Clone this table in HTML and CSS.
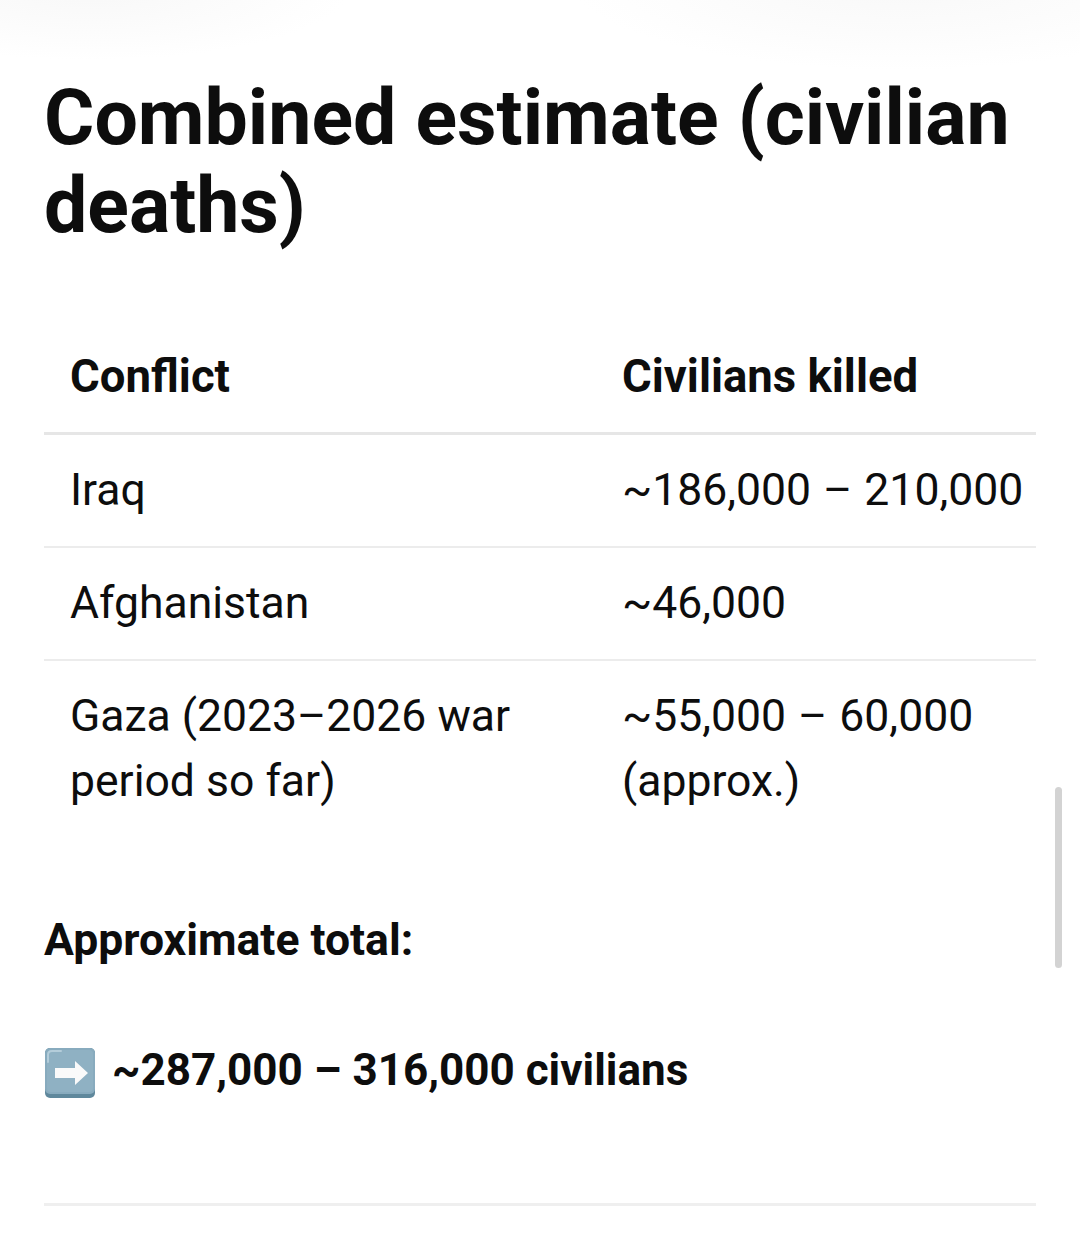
FILE: index.html
```html
<!DOCTYPE html>
<html lang="en">
<head>
<meta charset="utf-8">
<title>Combined estimate</title>
<link rel="stylesheet" href="styles.css">
</head>
<body>
<main class="page">
  <h1 class="title">Combined estimate (civilian deaths)</h1>
  <table class="data">
    <thead>
      <tr><th class="c1">Conflict</th><th class="c2">Civilians killed</th></tr>
    </thead>
    <tbody>
      <tr><td>Iraq</td><td>~186,000 – 210,000</td></tr>
      <tr><td>Afghanistan</td><td>~46,000</td></tr>
      <tr><td>Gaza (2023–2026 war period so far)</td><td>~55,000 – 60,000 (approx.)</td></tr>
    </tbody>
  </table>
  <p class="label">Approximate total:</p>
  <p class="total"><svg class="emoji" viewBox="0 0 50 50" width="50" height="50" aria-hidden="true">
      <rect x="0" y="0" width="50" height="50" rx="5" fill="#5f889c"/>
      <rect x="0" y="0" width="50" height="46" rx="5" fill="#88abbe"/>
      <rect x="2" y="2" width="46" height="42" rx="4" fill="#8fb1c3"/>
      <path d="M3 14 V7 Q3 3 7 3 H16" fill="none" stroke="#b4cdda" stroke-width="2" stroke-linecap="round"/>
      <path d="M10 20 H30 V13 L43 25 L30 37 V30 H10 Z" fill="#fafafa"/>
    </svg>~287,000 – 316,000 civilians</p>
  <hr class="rule">
</main>
<div class="scrollbar"></div>
</body>
</html>
```
FILE: styles.css
```css
html, body {
  margin: 0;
  padding: 0;
}
body {
  width: 1080px;
  min-height: 1233px;
  font-family: Roboto, "Noto Sans", "Liberation Sans", sans-serif;
  color: #0d0d0d;
  background:
    radial-gradient(ellipse 260px 70px at 90px -10px, #f8f8f8 0%, #fcfcfc 60%, rgba(255,255,255,0) 100%),
    radial-gradient(ellipse 330px 90px at 900px -20px, #f8f8f8 0%, #fcfcfc 60%, rgba(255,255,255,0) 100%),
    #ffffff;
  position: relative;
  overflow: hidden;
}
.page {
  padding: 0 44px;
  box-sizing: border-box;
  width: 1080px;
}
.title {
  margin: 74px 0 0;
  font-size: 77px;
  line-height: 88px;
  font-weight: 700;
}
.data {
  margin-top: 71px;
  width: 992px;
  border-collapse: collapse;
  font-size: 44.5px;
  line-height: 65px;
  table-layout: fixed;
}
.data th {
  text-align: left;
  font-weight: 700;
  font-size: 45.5px;
  padding: 23px 4px 23px 26px;
  border-bottom: 3px solid #e6e6e6;
}
.data th.c1 {
  width: 522px;
}
.data td {
  padding: 23px 4px 23px 26px;
  vertical-align: top;
  font-weight: 400;
}
.data td + td {
  word-spacing: 1px;
}
.data tbody tr {
  border-bottom: 2px solid #ececec;
}
.data tbody tr:last-child {
  border-bottom: none;
}
.label {
  margin: 71px 0 0;
  font-size: 44.5px;
  line-height: 65px;
  font-weight: 700;
}
.total {
  margin: 65px 0 0;
  font-size: 44px;
  line-height: 65px;
  font-weight: 700;
  display: flex;
  align-items: center;
}
.emoji {
  flex: none;
  margin: 4px 17px 0 1px;
}
.rule {
  margin: 100px 0 0;
  border: none;
  border-top: 3px solid #efefef;
  height: 0;
}
.scrollbar {
  position: absolute;
  left: 1055px;
  top: 787px;
  width: 7px;
  height: 181px;
  border-radius: 4px;
  background: #d3d3d3;
}
```
